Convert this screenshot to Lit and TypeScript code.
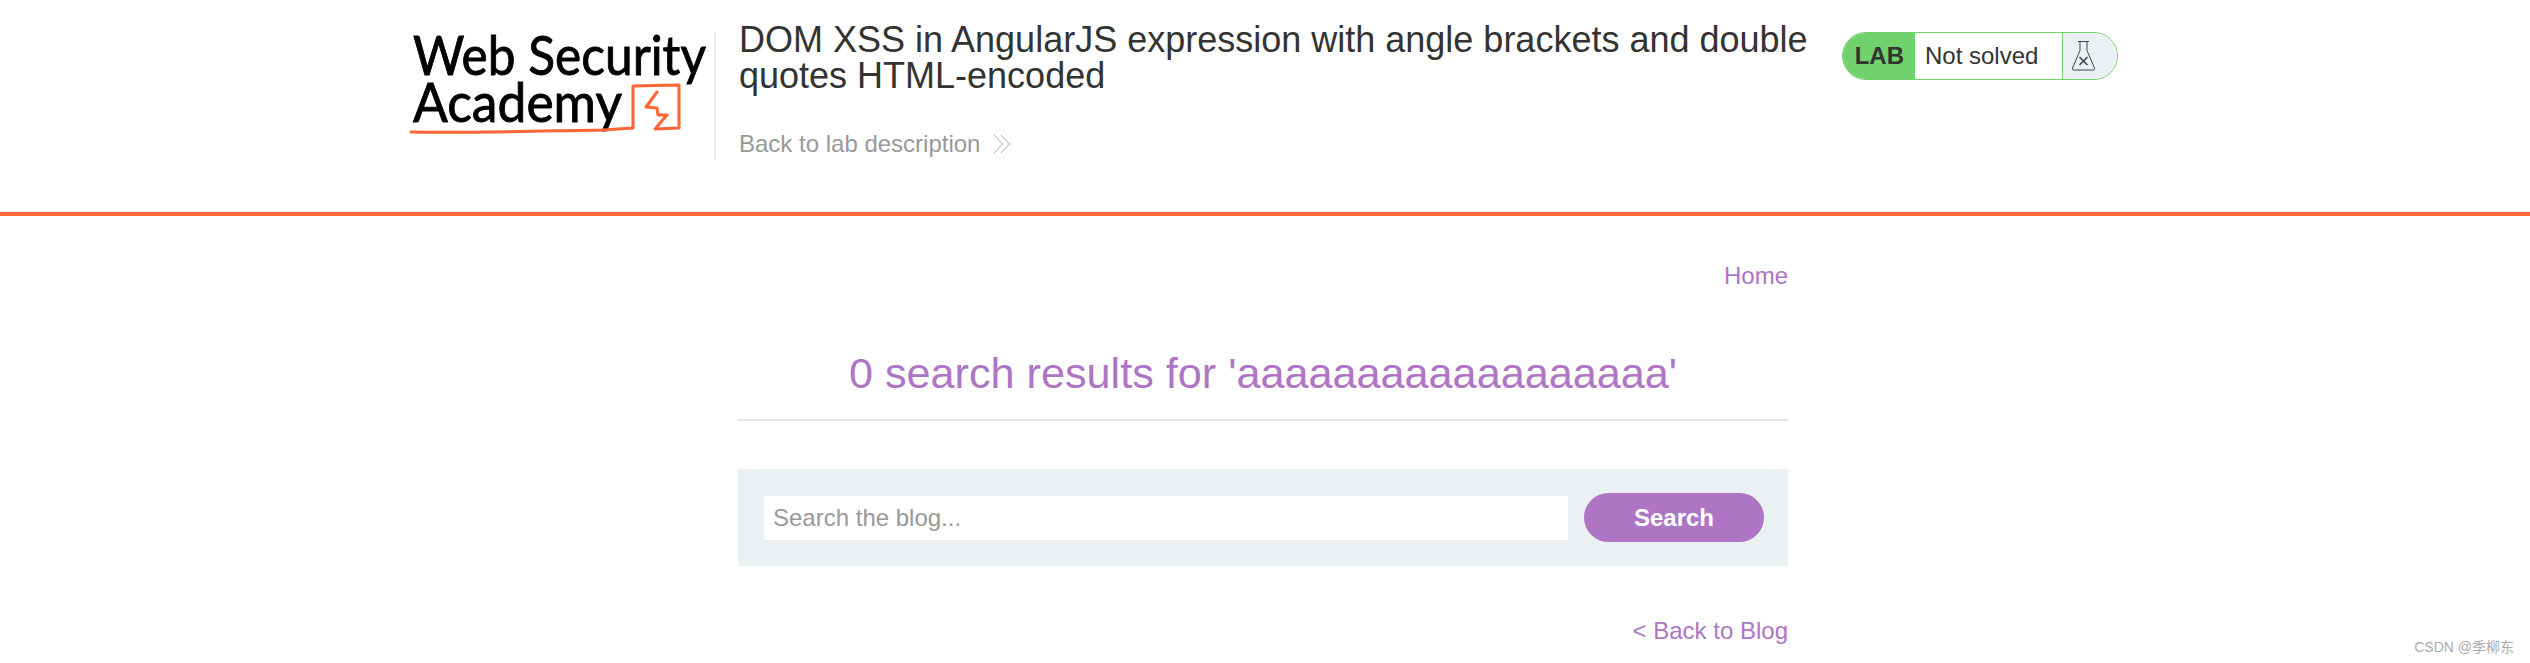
import { LitElement, html, css } from "lit";
import { customElement } from "lit/decorators.js";

@customElement("app-root")
export class AppRoot extends LitElement {
  static styles = css`
    :host { display: block; position: relative; height: 663px; overflow: hidden; background: #fff; font-family: "Liberation Sans", Arial, sans-serif; color: #333332; }
    .header { display: flex; align-items: flex-start; height: 212px; border-bottom: 4px solid #ff6633; padding-left: 410px; box-sizing: content-box; }
    .logo { display: block; width: 304px; height: 132px; margin-top: 30px; flex: none; overflow: visible; }
    .logo text { font-family: "Lato", sans-serif; font-weight: 400; fill: #000; stroke: #000; stroke-width: 0.9px; }
    .divider { width: 2px; height: 128px; margin-top: 32px; background: #eee; flex: none; }
    .title { width: 1126px; box-sizing: border-box; padding: 22px 20px 0 23px; flex: none; }
    .title h2 { margin: 0; font-size: 36px; line-height: 36px; font-weight: 400; }
    .backlab { display: flex; align-items: center; gap: 13px; margin-top: 33px; font-size: 24px; line-height: 34px; color: #999; }
    .badge { display: flex; height: 48px; width: 276px; margin-top: 32px; box-sizing: border-box; border: 1.500px solid #70d16d; border-radius: 24px; overflow: hidden; flex: none; }
    .lab { width: 72px; background: #70d16d; font-weight: 700; font-size: 24px; line-height: 45px; text-align: right; padding-right: 11px; box-sizing: border-box; }
    .state { width: 148px; font-size: 24px; line-height: 45px; padding-left: 10px; box-sizing: border-box; border-right: 1.500px solid #70d16d; }
    .flask { flex: 1; background: #ebf0f2; display: flex; align-items: center; padding-left: 8px; }
    main { width: 1050px; margin-left: 738px; display: flex; flex-direction: column; font-size: 24px; color: #ae75c5; }
    .home { text-align: right; margin-top: 44px; line-height: 32px; }
    h1 { margin: 55px 0 0; height: 74px; box-sizing: border-box; border-bottom: 2px solid #e6e6e6; text-align: center; font-size: 43.200px; line-height: 52px; font-weight: 400; }
    .search { margin-top: 48px; height: 97px; background: #ebf0f2; display: flex; align-items: center; gap: 14px; padding: 0 24px; box-sizing: border-box; }
    .input { flex: 1; height: 48px; background: #fff; border: 2px solid #eceeef; box-sizing: border-box; padding-left: 9px; font-size: 24px; line-height: 44px; color: #999; }
    .btn { width: 180px; height: 49px; border-radius: 25px; background: #ae75c5; color: #fff; font-weight: 700; font-size: 24px; line-height: 49px; text-align: center; }
    .back { text-align: right; margin-top: 49px; line-height: 32px; }
    .wm { position: absolute; right: 16px; bottom: 8px; font-size: 14px; line-height: 16px; color: #aaa; font-family: "Liberation Sans", "Noto Sans CJK SC", sans-serif; }
  `;
  render() {
    return html`
      <div class="header">
        <svg class="logo" viewBox="0 0 304 132">
          <text x="3" y="45" font-size="55" textLength="293" lengthAdjust="spacingAndGlyphs">Web Security</text>
          <text x="3" y="92" font-size="55" textLength="209" lengthAdjust="spacingAndGlyphs">Academy</text>
          <path d="M1 102 C60 103 130 101 193 100 L223 98 L223 56 L269 55 L269 98 L245 99 L257 85 L248 85 L247 78 L236 77 L247 62" fill="none" stroke="#ff6633" stroke-width="3" stroke-linejoin="round" stroke-linecap="round"/>
        </svg>
        <div class="divider"></div>
        <div class="title">
          <h2>DOM XSS in AngularJS expression with angle brackets and double quotes HTML-encoded</h2>
          <div class="backlab">Back to lab description
            <svg width="18" height="20" viewBox="0 0 18 20" fill="none" stroke="#aaa" stroke-width="1"><path d="M1 1l8.500 9-8.500 9M8 1l8.500 9-8.500 9"/></svg>
          </div>
        </div>
        <div class="badge">
          <div class="lab">LAB</div>
          <div class="state">Not solved</div>
          <div class="flask">
            <svg width="26" height="32" viewBox="0 0 26 32" fill="none" stroke="#444" stroke-width="1"><path d="M7 1.500h11M9 1.500v9L1.500 28q-.5 2 1.500 2h19q2 0 1.500-2L16 10.500v-9"/><path d="M8.500 17l8 8M16.500 17l-8 8" stroke-width="1.600"/></svg>
          </div>
        </div>
      </div>
      <main>
        <div class="home">Home</div>
        <h1>0 search results for 'aaaaaaaaaaaaaaaaaa'</h1>
        <div class="search">
          <div class="input">Search the blog...</div>
          <div class="btn">Search</div>
        </div>
        <div class="back">&lt; Back to Blog</div>
      </main>
      <div class="wm">CSDN @季柳东</div>
    `;
  }
}
